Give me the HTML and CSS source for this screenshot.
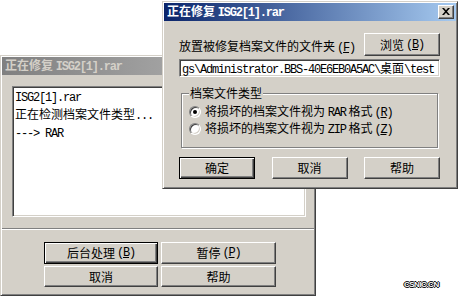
FILE: index.html
```html
<!DOCTYPE html>
<html lang="zh-CN">
<head>
<meta charset="utf-8">
<title>正在修复 ISG2[1].rar</title>
<link rel="stylesheet" href="styles.css">
</head>
<body>
<div class="win back">
  <div class="title inactive"><span>正在修复 <span class="m">ISG2[1].rar</span></span></div>
  <div class="back-body">
    <div class="list">
      <div><span class="m">ISG2[1].rar</span></div>
      <div>正在检测档案文件类型<span class="m">...</span></div>
      <div><span class="m">---&gt; RAR</span></div>
    </div>
    <div class="sep"></div>
    <div class="btn-grid">
      <button class="btn default">后台处理<span class="m">(<u>B</u>)</span></button>
      <button class="btn">暂停<span class="m">(<u>P</u>)</span></button>
      <button class="btn">取消</button>
      <button class="btn">帮助</button>
    </div>
  </div>
</div>

<div class="win front">
  <div class="title active"><span>正在修复 <span class="m">ISG2[1].rar</span></span>
    <span class="close"><svg width="8" height="7" viewBox="0 0 8 7"><path d="M0 0h2l2 2.2L6 0h2L5 3.5 8 7H6L4 4.8 2 7H0l3-3.5z" fill="#000"/></svg></span>
  </div>
  <div class="front-body">
    <div class="row1">
      <span class="label">放置被修复档案文件的文件夹<span class="m">(<u>F</u>)</span></span>
      <button class="btn browse">浏览<span class="m">(<u>B</u>)</span></button>
    </div>
    <div class="field"><span class="m">gs\Administrator.BBS-40E6EB0A5AC\</span>桌面<span class="m">\test</span></div>
    <fieldset class="group">
      <legend>档案文件类型</legend>
      <div class="opt"><span class="radio on"></span><span>将损坏的档案文件视为 <span class="m">RAR</span> 格式<span class="m">(<u>R</u>)</span></span></div>
      <div class="opt"><span class="radio"></span><span>将损坏的档案文件视为 <span class="m">ZIP</span> 格式<span class="m">(<u>Z</u>)</span></span></div>
    </fieldset>
    <div class="btn-row">
      <button class="btn default">确定</button>
      <button class="btn">取消</button>
      <button class="btn">帮助</button>
    </div>
  </div>
</div>

<div class="wm">CSNIC.CN</div>
</body>
</html>
```

FILE: styles.css
```css
* { box-sizing: border-box; }
html, body { margin: 0; padding: 0; }
body {
  width: 458px;
  height: 296px;
  background: #fff;
  position: relative;
  overflow: hidden;
  font: 12px/14px "Noto Sans CJK SC", sans-serif;
  color: #000;
}
.m {
  font-family: "Liberation Mono", monospace;
  font-size: 12px;
  letter-spacing: -1.2px;
}
u { text-underline-offset: 1px; }

.win {
  position: absolute;
  background: #d4d0c8;
  border: 1px solid;
  border-color: #d4d0c8 #404040 #404040 #d4d0c8;
  box-shadow: inset 1px 1px #fff, inset -1px -1px #808080;
  padding: 1px;
  display: flex;
  flex-direction: column;
}
.back { left: 0; top: 55px; width: 316px; height: 241px; }
.front { left: 162px; top: 1px; width: 296px; height: 188px; }

.title {
  height: 18px;
  flex: none;
  display: flex;
  align-items: center;
  padding-left: 3px;
  font-weight: bold;
  position: relative;
  white-space: nowrap;
}
.title.inactive { background: linear-gradient(to right, #808080, #c0c0c0); color: #d4d0c8; }
.title.active { background: linear-gradient(to right, #0a246a, #a6caf0); color: #fff; }

.close {
  position: absolute;
  right: 2px;
  top: 2px;
  width: 16px;
  height: 14px;
  background: #d4d0c8;
  border: 1px solid;
  border-color: #fff #404040 #404040 #fff;
  box-shadow: inset -1px -1px #808080;
  display: flex;
  align-items: center;
  justify-content: center;
  padding: 0 1px 1px 0;
}
.close svg { display: block; }

.back-body { flex: 1; display: flex; flex-direction: column; }
.list {
  margin: 11px 8px 0 10px;
  height: 131px;
  background: #fff;
  border: 1px solid;
  border-color: #808080 #fff #fff #808080;
  box-shadow: inset 1px 1px #404040, inset -1px -1px #d4d0c8;
  padding: 1px 2px;
  line-height: 16px;
  white-space: nowrap;
}
.sep {
  height: 2px;
  margin-top: 11px;
  border-top: 1px solid #808080;
  border-bottom: 1px solid #fff;
}
.btn-grid {
  margin: 12px 0 0 42px;
  display: grid;
  grid-template-columns: 114px 115px;
  grid-template-rows: 22px 21px;
  column-gap: 3px;
  row-gap: 2px;
}

.btn {
  font: inherit;
  color: #000;
  background: #d4d0c8;
  border: 1px solid;
  border-color: #fff #404040 #404040 #fff;
  box-shadow: inset -1px -1px #808080;
  padding: 0;
  margin: 0;
  display: flex;
  align-items: center;
  justify-content: center;
  white-space: nowrap;
}
.btn .m { margin-left: 2px; }
.btn.default {
  border-color: #000;
  box-shadow: inset 1px 1px #fff, inset -1px -1px #404040, inset -2px -2px #808080;
}

.front-body {
  flex: 1;
  display: flex;
  flex-direction: column;
  padding: 0 16px 0 15px;
}
.row1 {
  margin-top: 12px;
  display: flex;
  justify-content: space-between;
  align-items: flex-end;
}
.label { margin-bottom: 1px; white-space: nowrap; }
.label .m { margin-left: 2px; }
.browse { width: 76px; height: 23px; }
.field {
  margin-top: 3px;
  height: 18px;
  background: #fff;
  border: 1px solid;
  border-color: #808080 #fff #fff #808080;
  box-shadow: inset 1px 1px #404040, inset -1px -1px #d4d0c8;
  padding: 0 2px 0 2px;
  line-height: 16px;
  white-space: nowrap;
  overflow: hidden;
}
.group {
  margin: 9px 2px 0 2px;
  height: 62px;
  min-inline-size: 0;
  padding: 0 0 0 7px;
  border: 1px solid #808080;
  box-shadow: 1px 1px 0 #fff, inset 1px 1px 0 #fff;
}
.group legend {
  padding: 0 1px;
  background: #d4d0c8;
  line-height: 14px;
}
.opt {
  margin-top: 3px;
  height: 17px;
  display: flex;
  align-items: center;
  gap: 4px;
  white-space: nowrap;
}
.opt + .opt { margin-top: 0; }
.opt .m + .m { margin-left: 2px; }
.radio {
  width: 12px;
  height: 12px;
  flex: none;
  border-radius: 50%;
  background: #fff;
  border: 1px solid;
  border-color: #808080 #fff #fff #808080;
  box-shadow: inset 1px 1px #404040, inset -1px -1px #d4d0c8;
  display: flex;
  align-items: center;
  justify-content: center;
}
.radio.on::after {
  content: "";
  width: 4px;
  height: 4px;
  border-radius: 50%;
  background: #000;
}
.btn-row {
  margin-top: 9px;
  display: flex;
  justify-content: space-between;
}
.btn-row .btn { width: 76px; height: 22px; }

.wm {
  position: absolute;
  left: 404px;
  top: 280px;
  font: bold 8px/9px "Liberation Sans", sans-serif;
  letter-spacing: -0.5px;
  color: #fff;
  text-shadow: 1px 0 #000, -1px 0 #000, 0 1px #000, 0 -1px #000;
}
```
